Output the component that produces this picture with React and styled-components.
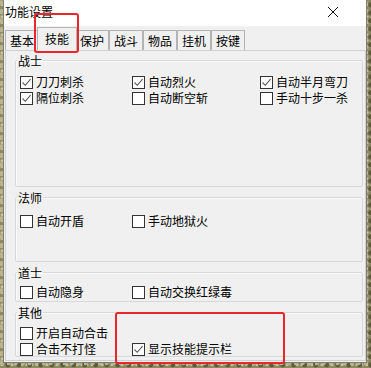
import React from "react";
import styled, { createGlobalStyle } from "styled-components";

const GlobalStyle = createGlobalStyle`
  html, body {
    margin: 0;
    padding: 0;
  }
  body {
    width: 371px;
    height: 368px;
    overflow: hidden;
    font-family: "Noto Sans CJK SC", "Noto Sans", sans-serif;
    background-color: #8d8a62;
    background-image:
      radial-gradient(circle at 20% 30%, #b9b48e 0 2px, transparent 3px),
      radial-gradient(circle at 70% 60%, #5f5c3e 0 2px, transparent 3px),
      radial-gradient(circle at 40% 80%, #c8c39c 0 1px, transparent 2px);
    background-size: 7px 9px, 11px 8px, 5px 6px;
  }
`;

const Stage = styled.div`
  position: relative;
  padding-left: 3px;
  width: 371px;
  height: 368px;
  box-sizing: border-box;
`;

const Window = styled.div`
  width: 364px;
  height: 363px;
  box-sizing: border-box;
  background: #f0f0f0;
  border: 1px solid #7c7c7c;
  border-top: none;
  display: flex;
  flex-direction: column;
  color: #000;
  font-size: 12px;
`;

const TitleBar = styled.div`
  height: 26px;
  background: #ffffff;
  display: flex;
  align-items: center;
  justify-content: space-between;
  padding: 0 27px 0 1px;
  line-height: 14px;
`;

const Title = styled.span`
  font-size: 12px;
  margin-top: -2px;
`;

const CloseIcon = styled.svg`
  width: 12px;
  height: 12px;
  margin-top: -2px;
`;

const TabRow = styled.div`
  height: 24px;
  display: flex;
  align-items: flex-end;
  padding-left: 1px;
  position: relative;
  z-index: 1;
`;

const Tab = styled.div`
  height: ${(p) => (p.$active ? 24 : 20)}px;
  box-sizing: border-box;
  padding: ${(p) => (p.$active ? "3px 7px 0" : "2px 4px 0")};
  margin: ${(p) => (p.$active ? "0 -2px -1px -2px" : "0")};
  border: 1px solid #b4b4b4;
  border-bottom: ${(p) => (p.$active ? "1px solid #f0f0f0" : "none")};
  background: #f0f0f0;
  font-size: 12px;
  line-height: 15px;
  position: relative;
  z-index: ${(p) => (p.$active ? 2 : 1)};
`;

const Panel = styled.div`
  flex: 1;
  margin: 0 0 1px 1px;
  border: 1px solid #d0d0d0;
  background: #f0f0f0;
  padding: 3px 2px 0 9px;
  display: flex;
  flex-direction: column;
  gap: 4px;
`;

const Group = styled.fieldset`
  margin: 0;
  padding: 0 0 0 4px;
  min-width: 0;
  height: ${(p) => p.$h}px;
  box-sizing: border-box;
  border: 1px solid #d8d8d8;
  border-radius: 2px;
  box-shadow: inset 1px 1px 0 #fafafa;
  display: flex;
  flex-direction: column;
`;

const Legend = styled.legend`
  font-size: 12px;
  line-height: 13px;
  padding: 0 1px;
  margin-left: -3px;
`;

const Row = styled.div`
  display: grid;
  grid-template-columns: 112px 128px 1fr;
  height: 16px;
  align-items: center;
  margin-top: ${(p) => p.$top || 0}px;
`;

const Check = styled.label`
  display: flex;
  align-items: center;
  gap: 3px;
  font-size: 12px;
  line-height: 14px;
  white-space: nowrap;
`;

const Box = styled.span`
  width: 13px;
  height: 13px;
  box-sizing: border-box;
  border: 1px solid #333;
  background: #fff;
  display: flex;
  align-items: center;
  justify-content: center;
  flex-shrink: 0;
`;

const Highlight = styled.div`
  position: absolute;
  left: ${(p) => p.$x}px;
  top: ${(p) => p.$y}px;
  width: ${(p) => p.$w}px;
  height: ${(p) => p.$h}px;
  box-sizing: border-box;
  border: 2px solid #e8262b;
  border-radius: 3px;
  z-index: 5;
  pointer-events: none;
`;

function CheckItem({ label, checked }) {
  return (
    <Check>
      <Box>
        {checked && (
          <svg width="11" height="11" viewBox="0 0 11 11">
            <path d="M1.5 5.5 L4.2 8.3 L9.6 2.2" fill="none" stroke="#5a5a5a" strokeWidth="1.1" />
          </svg>
        )}
      </Box>
      {label}
    </Check>
  );
}

const tabs = ["基本", "技能", "保护", "战斗", "物品", "挂机", "按键"];

export default function App() {
  return (
    <Stage>
      <GlobalStyle />
      <Window>
        <TitleBar>
          <Title>功能设置</Title>
          <CloseIcon viewBox="0 0 12 12">
            <path d="M1 1 L11 11 M11 1 L1 11" stroke="#111" strokeWidth="1" />
          </CloseIcon>
        </TitleBar>
        <TabRow>
          {tabs.map((t) => (
            <Tab key={t} $active={t === "技能"}>
              {t}
            </Tab>
          ))}
        </TabRow>
        <Panel>
          <Group $h={133}>
            <Legend>战士</Legend>
            <Row $top={7}>
              <CheckItem label="刀刀刺杀" checked />
              <CheckItem label="自动烈火" checked />
              <CheckItem label="自动半月弯刀" checked />
            </Row>
            <Row>
              <CheckItem label="隔位刺杀" checked />
              <CheckItem label="自动断空斩" />
              <CheckItem label="手动十步一杀" />
            </Row>
          </Group>
          <Group $h={71}>
            <Legend>法师</Legend>
            <Row $top={9}>
              <CheckItem label="自动开盾" />
              <CheckItem label="手动地狱火" />
            </Row>
          </Group>
          <Group $h={36}>
            <Legend>道士</Legend>
            <Row $top={5}>
              <CheckItem label="自动隐身" />
              <CheckItem label="自动交换红绿毒" />
            </Row>
          </Group>
          <Group $h={51}>
            <Legend>其他</Legend>
            <Row $top={6}>
              <CheckItem label="开启自动合击" />
            </Row>
            <Row>
              <CheckItem label="合击不打怪" />
              <CheckItem label="显示技能提示栏" checked />
            </Row>
          </Group>
        </Panel>
      </Window>
      <Highlight $x={34} $y={13} $w={45} $h={40} />
      <Highlight $x={115} $y={312} $w={170} $h={52} />
    </Stage>
  );
}
